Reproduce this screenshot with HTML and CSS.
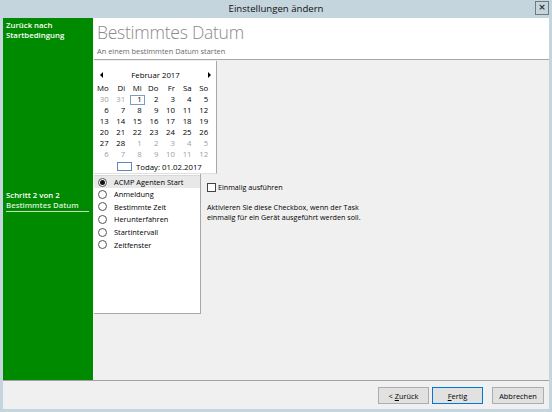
FILE: index.html
```html
<!DOCTYPE html>
<html lang="de">
<head>
<meta charset="utf-8">
<title>Einstellungen ändern</title>
<link rel="stylesheet" href="styles.css">
</head>
<body>
<div class="window">
  <div class="titlebar">
    <span class="title">Einstellungen ändern</span>
    <span class="close">×</span>
  </div>
  <div class="frame">
    <div class="main">
      <aside class="sidebar">
        <div class="back">Zurück nach<br>Startbedingung</div>
        <div class="step">
          <div class="step-num">Schritt 2 von 2</div>
          <div class="step-name">Bestimmtes Datum</div>
        </div>
      </aside>
      <section class="content">
        <header class="header">
          <h1>Bestimmtes Datum</h1>
          <p>An einem bestimmten Datum starten</p>
        </header>
        <div class="body">
          <div class="calendar">
            <div class="cal-head">
              <span class="arrow arrow-l"></span>
              <span class="month">Februar 2017</span>
              <span class="arrow arrow-r"></span>
            </div>
            <div class="cal-grid">
              <span class="dn">Mo</span><span class="dn">Di</span><span class="dn">Mi</span><span class="dn">Do</span><span class="dn">Fr</span><span class="dn">Sa</span><span class="dn">So</span>
              <span class="o">30</span><span class="o">31</span><span class="today">1</span><span>2</span><span>3</span><span>4</span><span>5</span>
              <span>6</span><span>7</span><span>8</span><span>9</span><span>10</span><span>11</span><span>12</span>
              <span>13</span><span>14</span><span>15</span><span>16</span><span>17</span><span>18</span><span>19</span>
              <span>20</span><span>21</span><span>22</span><span>23</span><span>24</span><span>25</span><span>26</span>
              <span>27</span><span>28</span><span class="o">1</span><span class="o">2</span><span class="o">3</span><span class="o">4</span><span class="o">5</span>
              <span class="o">6</span><span class="o">7</span><span class="o">8</span><span class="o">9</span><span class="o">10</span><span class="o">11</span><span class="o">12</span>
            </div>
            <div class="cal-today"><span class="today-box"></span>Today: 01.02.2017</div>
          </div>
          <div class="lower">
            <ul class="list">
              <li class="sel"><span class="radio on"></span>ACMP Agenten Start</li>
              <li><span class="radio"></span>Anmeldung</li>
              <li><span class="radio"></span>Bestimmte Zeit</li>
              <li><span class="radio"></span>Herunterfahren</li>
              <li><span class="radio"></span>Startintervall</li>
              <li><span class="radio"></span>Zeitfenster</li>
            </ul>
            <div class="options">
              <label class="check"><span class="box"></span>Einmalig ausführen</label>
              <p class="desc">Aktivieren Sie diese Checkbox, wenn der Task<br>einmalig für ein Gerät ausgeführt werden soll.</p>
            </div>
          </div>
        </div>
      </section>
    </div>
    <footer class="footer">
      <button class="btn">&lt; <u>Z</u>urück</button>
      <button class="btn focus"><u>F</u>ertig</button>
      <button class="btn cancel">Abbrechen</button>
    </footer>
  </div>
</div>
</body>
</html>
```

FILE: styles.css
```css
* { box-sizing: border-box; }
html, body { margin: 0; padding: 0; }
body {
  width: 552px;
  height: 412px;
  background: #c4d5de;
  font-family: "Open Sans", "Noto Sans", sans-serif;
  color: #000;
  overflow: hidden;
}
.window {
  display: flex;
  flex-direction: column;
  height: 412px;
}
.titlebar {
  height: 18px;
  display: grid;
  grid-template-columns: 1fr auto 1fr;
  align-items: center;
}
.title {
  grid-column: 2;
  font-size: 9.6px;
  line-height: 18px;
  color: #111;
}
.close {
  grid-column: 3;
  justify-self: end;
  align-self: start;
  margin-top: 1px;
  margin-right: 3px;
  width: 14px;
  height: 14px;
  border: 1px solid #6e7a80;
  font-size: 9px;
  font-weight: bold;
  line-height: 11px;
  text-align: center;
  font-family: "DejaVu Sans", sans-serif;
  color: #333;
}
.frame {
  flex: 1;
  margin: 0 3px 3px 3px;
  display: flex;
  flex-direction: column;
  background: #f0f0f0;
}
.main {
  height: 362px;
  display: flex;
}
.sidebar {
  width: 90px;
  background: #008a00;
  color: #fff;
  padding: 2px 4px 0 3px;
  display: flex;
  flex-direction: column;
  font-size: 7.8px;
  font-weight: 600;
  line-height: 10px;
}
.step { margin-top: 150px; }
.step-name {
  color: #d8f0d8;
  padding-bottom: 1px;
  border-bottom: 1px solid #c8dcc8;
}
.content {
  flex: 1;
  display: flex;
  flex-direction: column;
  border-left: 1px solid #f8f8f8;
}
.header {
  height: 42px;
  background: #fff;
  border-bottom: 1px solid #a8a8a8;
  padding: 4px 0 0 3px;
}
.header h1 {
  margin: 0;
  font-size: 17.5px;
  font-weight: 300;
  letter-spacing: -0.25px;
  line-height: 21px;
  color: #8a8a8a;
}
.header p {
  margin: 4px 0 0 0;
  font-size: 7.4px;
  line-height: 9px;
  color: #6a6a6a;
}
.body {
  flex: 1;
  display: flex;
  flex-direction: column;
  padding: 1px 0 0 0;
}
.calendar {
  width: 123px;
  height: 113px;
  background: #fff;
  border-right: 1px solid #a8a8a8;
  border-bottom: 1px solid #e0e0e0;
  font-size: 7.8px;
}
.cal-head {
  display: flex;
  align-items: center;
  justify-content: space-between;
  height: 11px;
  margin-top: 8px;
  padding: 0 5px 0 6px;
}
.month { font-size: 7.8px; }
.arrow {
  width: 0;
  height: 0;
  border-top: 3px solid transparent;
  border-bottom: 3px solid transparent;
}
.arrow-l { border-right: 3px solid #000; }
.arrow-r { border-left: 3px solid #000; }
.cal-grid {
  display: grid;
  grid-template-columns: repeat(7, 16.6px);
  grid-auto-rows: 11px;
  margin-top: 3px;
}
.cal-grid span {
  text-align: right;
  padding-right: 2px;
  line-height: 11px;
  position: relative;
}
.cal-grid .o { color: #a0a0a0; }
.cal-grid .today::after {
  content: "";
  position: absolute;
  left: 3px;
  right: -1px;
  top: 1px;
  bottom: 0;
  border: 1px solid #7a9cc6;
}
.cal-today {
  display: flex;
  align-items: center;
  height: 11px;
  margin-top: 1px;
  padding-left: 23px;
}
.today-box {
  width: 15px;
  height: 9px;
  border: 1px solid #5d87bd;
  margin-right: 4px;
}
.lower {
  display: flex;
  align-items: flex-start;
}
.list {
  list-style: none;
  margin: 0;
  padding: 1px 0 0 0;
  width: 107px;
  height: 140px;
  background: #fff;
  border-right: 1px solid #a8a8a8;
  border-bottom: 1px solid #a8a8a8;
  font-size: 7.4px;
}
.list li {
  display: flex;
  align-items: center;
  height: 12.6px;
  padding-left: 4px;
}
.list li.sel {
  background: #e8e8e8;
  border-top: 1px solid #d8d8d8;
  height: 13px;
}
.radio {
  width: 9px;
  height: 9px;
  border: 1px solid #555;
  border-radius: 50%;
  margin-right: 7px;
  background: #fff;
  display: flex;
  align-items: center;
  justify-content: center;
}
.radio.on::after {
  content: "";
  width: 5px;
  height: 5px;
  border-radius: 50%;
  background: #111;
}
.options {
  padding: 8px 0 0 6px;
  font-size: 7.2px;
}
.check {
  display: flex;
  align-items: center;
  height: 10px;
}
.box {
  width: 9px;
  height: 9px;
  border: 1px solid #444;
  background: #fff;
  margin-right: 2px;
}
.desc {
  margin: 11px 0 0 0;
  line-height: 9.5px;
}
.footer {
  flex: 1;
  border-top: 1px solid #a0a0a0;
  display: flex;
  justify-content: flex-end;
  align-items: flex-start;
  padding: 6px 5px 0 0;
}
.btn {
  height: 17px;
  width: 51px;
  padding: 0;
  margin: 0;
  font-family: "Open Sans", "Noto Sans", sans-serif;
  font-size: 7.4px;
  background: #e1e1e1;
  border: 1px solid #adadad;
  color: #000;
}
.btn.focus {
  margin-left: 3px;
  border-color: #0078d7;
}
.cancel {
  margin-left: 9px;
  width: 52px;
}
```
